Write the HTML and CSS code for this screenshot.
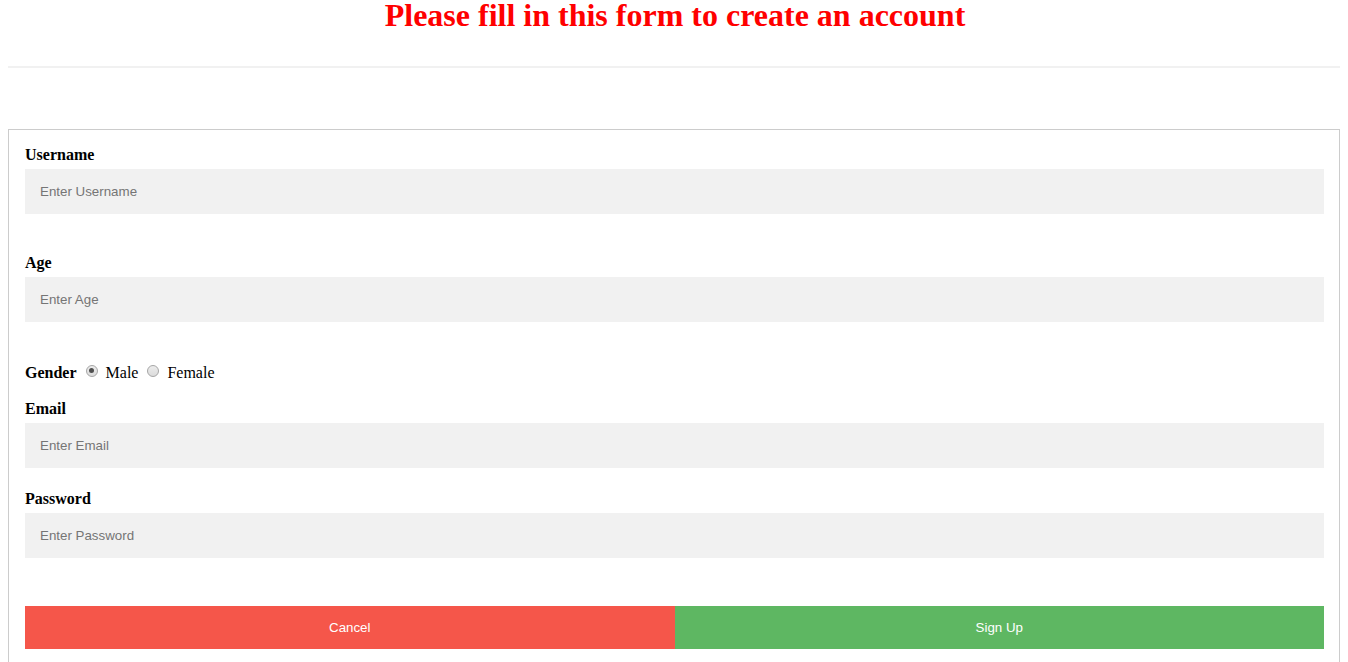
FILE: index.html
```html
<!DOCTYPE html>
<html>
<head>
<meta charset="utf-8">
<title>Sign Up</title>
<link rel="stylesheet" href="styles.css">
</head>
<body>
<h1 class="title">Please fill in this form to create an account</h1>
<hr class="divider">
<form class="container">
  <label class="field-label" for="username">Username</label>
  <input class="text-input" id="username" type="text" placeholder="Enter Username">
  <div class="spacer"></div>
  <label class="field-label" for="age">Age</label>
  <input class="text-input" id="age" type="text" placeholder="Enter Age">
  <div class="spacer"></div>
  <div class="gender-row">
    <span class="gender-label">Gender</span>
    <input class="radio" type="radio" name="gender" id="male" checked>
    <label class="radio-label" for="male">Male</label>
    <input class="radio" type="radio" name="gender" id="female">
    <label class="radio-label" for="female">Female</label>
  </div>
  <div class="spacer"></div>
  <label class="field-label" for="email">Email</label>
  <input class="text-input" id="email" type="text" placeholder="Enter Email">
  <label class="field-label" for="password">Password</label>
  <input class="text-input" id="password" type="password" placeholder="Enter Password">
  <div class="spacer"></div>
  <div class="buttons">
    <button type="button" class="btn cancel">Cancel</button>
    <button type="submit" class="btn signup">Sign Up</button>
  </div>
</form>
</body>
</html>
```

FILE: styles.css
```css
html, body {
  background: #ffffff;
}
body {
  margin: 0 8px 8px 8px;
  font-family: "Liberation Serif", "Times New Roman", serif;
  font-size: 16px;
  color: #000;
}
.title {
  margin: 0;
  font-size: 32px;
  line-height: 30px;
  font-weight: bold;
  color: #ff0000;
  text-align: center;
  padding-left: 2px;
}
.divider {
  margin: 36px 0 61px 0;
  border: 1px solid #f1f1f1;
  height: 0;
}
.container {
  border: 1px solid #cccccc;
  padding: 16px 15px 16px 16px;
  display: flex;
  flex-direction: column;
}
.field-label {
  display: block;
  font-weight: bold;
  line-height: 18px;
  height: 18px;
}
.text-input {
  display: block;
  box-sizing: border-box;
  width: 100%;
  height: 45px;
  margin: 5px 0 22px 0;
  padding: 0 15px;
  border: none;
  outline: none;
  background: #f1f1f1;
  font-family: "Liberation Sans", Arial, sans-serif;
  font-size: 13.333px;
  color: #000;
}
.text-input::placeholder {
  color: #757575;
}
.spacer {
  height: 18px;
}
.gender-row {
  display: flex;
  align-items: center;
  box-sizing: border-box;
  height: 20px;
  padding-top: 2px;
  line-height: 18px;
}
.gender-label {
  font-weight: bold;
}
.radio {
  appearance: none;
  -webkit-appearance: none;
  box-sizing: border-box;
  width: 12px;
  height: 12px;
  margin: 0 8px 5px 9px;
  border: 1px solid #a6a6a6;
  border-radius: 50%;
  background: linear-gradient(#ececec, #dcdcdc);
  position: relative;
}
.radio:checked::after {
  content: "";
  position: absolute;
  left: 2.5px;
  top: 2.5px;
  width: 5px;
  height: 5px;
  border-radius: 50%;
  background: #4f4f4f;
}
.buttons {
  display: flex;
  margin: 8px 0;
}
.btn {
  flex: 1 1 0;
  height: 43px;
  border: none;
  padding: 14px 20px;
  color: #ffffff;
  font-family: "Liberation Sans", Arial, sans-serif;
  font-size: 13.333px;
  line-height: 15px;
  cursor: pointer;
}
.cancel {
  background: #f5564a;
}
.signup {
  background: #5eb762;
}
```
